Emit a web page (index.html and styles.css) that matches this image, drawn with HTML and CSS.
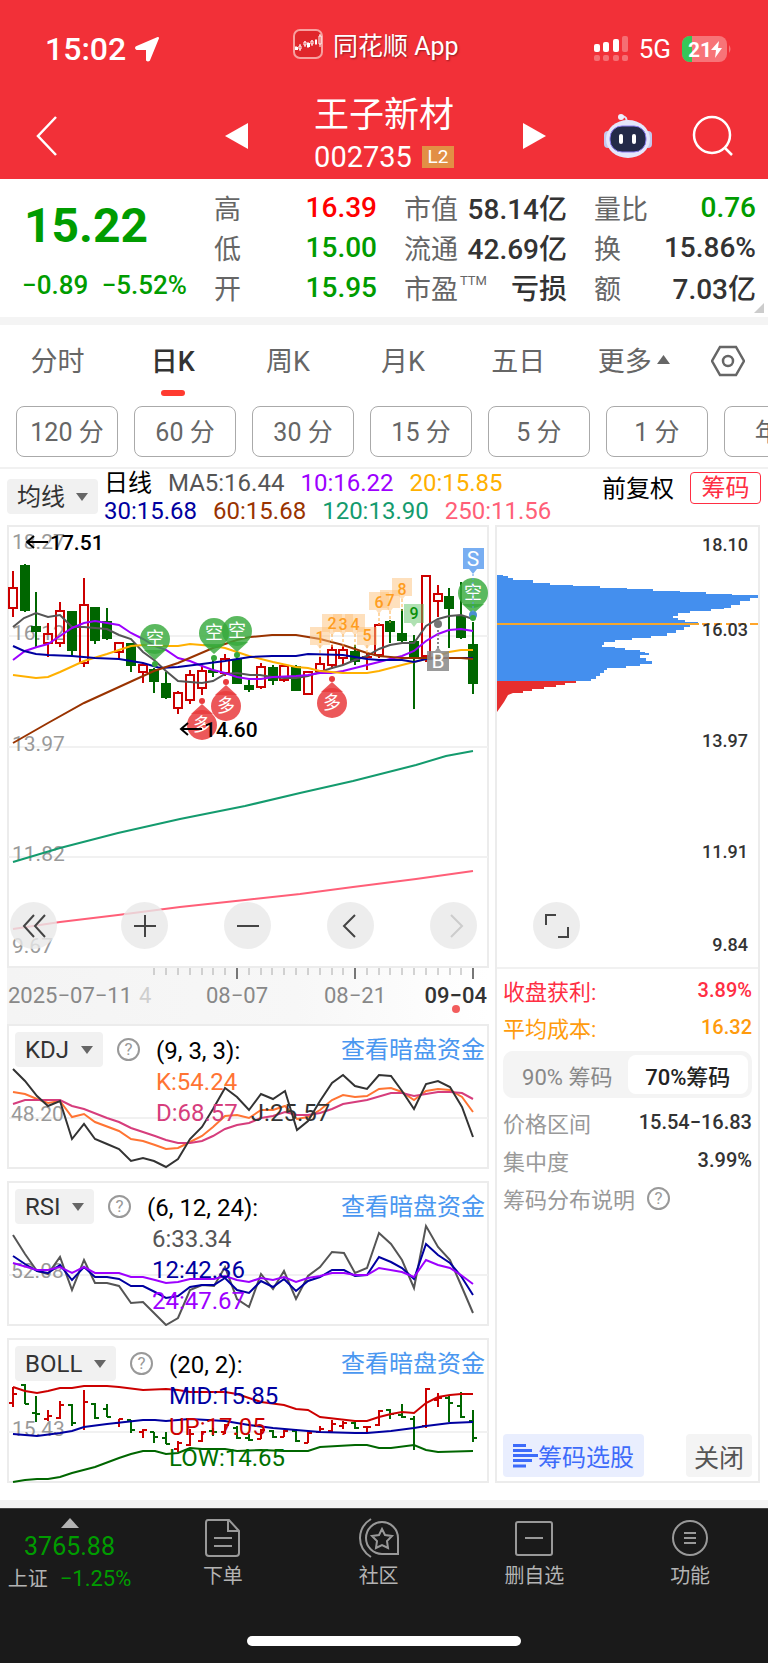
FILE: index.html
```html
<!DOCTYPE html>
<html lang="zh-CN">
<head>
    <meta charset="UTF-8">
    <meta name="viewport" content="width=device-width, initial-scale=1.0">
    <title>王子新材 002735</title>
    <link rel="stylesheet" href="styles.css">
</head>
<body>
    <header class="top">
        <div class="status">
            <div class="status-side">
                <span class="clock">15:02</span>
                <svg width="26" height="26" viewBox="0 0 26 26"><path d="M24 2 15 24q-1 1-2 0V13H3q-2-1 0-2z" fill="#fff" stroke="#fff" stroke-width="2" stroke-linejoin="round"/></svg>
            </div>
            <div class="status-app">
                <svg width="30" height="30" viewBox="0 0 30 30">
                    <rect x="1" y="1" width="28" height="28" rx="6" fill="#e0262b" stroke="#f7a09f" stroke-width="2"/>
                    <path d="M3 17v4M7 15v7M12 12v6M15 13v6M19 11v6M23 10v6M27 5v13" stroke="#fff"/>
                    <path d="M2 18h3v3H2zM14 14h3v4h-3zM22 11h2v4h-2z" fill="#fff"/>
                    <path d="M6 17h2v3H6zM11 13h2v3h-2zM18 12h2v3h-2zM26 7h2v8h-2z" fill="#e0262b" stroke="#fff"/>
                </svg>
                <span>同花顺 App</span>
            </div>
            <div class="status-side right">
                <svg width="34" height="26" viewBox="0 0 34 26">
                    <g fill="#fff"><rect y="8" width="6" height="8" rx="2"/><rect x="9" y="6" width="6" height="10" rx="2"/><rect x="19" y="3" width="6" height="13" rx="2"/></g>
                    <g fill="#fff" opacity=".3"><rect x="28" y="0" width="6" height="16" rx="2"/><rect y="19" width="6" height="6" rx="2"/><rect x="9" y="19" width="6" height="6" rx="2"/><rect x="19" y="19" width="6" height="6" rx="2"/><rect x="28" y="19" width="6" height="6" rx="2"/></g>
                </svg>
                <span class="net">5G</span>
                <svg width="50" height="26" viewBox="0 0 50 26">
                    <rect width="45" height="26" rx="8" fill="#f77478"/>
                    <path d="M10 0H8a8 8 0 0 0-8 8v10a8 8 0 0 0 8 8h2z" fill="#34c759"/>
                    <path d="M47 9q3 4 0 8z" fill="#f77478"/>
                    <text x="6" y="21" class="battery-num">21</text>
                    <path d="M37 5 29 14h5l-1 8 7-10h-4z" fill="#fff"/>
                </svg>
            </div>
        </div>
        <nav class="titlebar">
            <button class="icon-btn back" aria-label="返回"><svg width="22" height="40" viewBox="0 0 22 40"><path d="M20 1 2 20l18 19" fill="none" stroke="#fff" stroke-width="2.500"/></svg></button>
            <button class="icon-btn prev" aria-label="上一只"><svg width="24" height="26" viewBox="0 0 24 26"><path d="M23 0v26L0 13z" fill="#fff"/></svg></button>
            <div class="stock">
                <h1>王子新材</h1>
                <div class="code">002735 <span>L2</span></div>
            </div>
            <button class="icon-btn next" aria-label="下一只"><svg width="24" height="26" viewBox="0 0 24 26"><path d="M1 0v26l23-13z" fill="#fff"/></svg></button>
            <button class="icon-btn robot" aria-label="助手">
                <svg width="48" height="46" viewBox="0 0 48 46">
                    <path d="M22 9q2-5-4-6" fill="none" stroke="#dfe4fa" stroke-width="2"/><circle cx="17" cy="4" r="3" fill="#eef0ff"/>
                    <rect x="0" y="18" width="8" height="17" rx="4" fill="#c3c8ee"/><rect x="40" y="18" width="8" height="17" rx="4" fill="#c3c8ee"/>
                    <ellipse cx="24" cy="26" rx="22" ry="19" fill="#e4e7fb"/>
                    <rect x="6" y="13" width="36" height="26" rx="12" fill="#232a48" stroke="#8b7df0"/>
                    <rect x="15" y="21" width="4" height="10" rx="2" fill="#fff"/><rect x="28" y="21" width="4" height="10" rx="2" fill="#fff"/>
                </svg>
            </button>
            <button class="icon-btn search" aria-label="搜索"><svg width="42" height="42" viewBox="0 0 42 42"><g fill="none" stroke="#fff" stroke-width="2.500"><circle cx="20" cy="20" r="18"/><path d="m33 33 7 7"/></g></svg></button>
        </nav>
    </header>

    <section class="quote">
        <div class="price">
            <div class="last">15.22</div>
            <div class="change"><span>−0.89</span><span>−5.52%</span></div>
        </div>
        <dl>
            <div><dt>高</dt><dd class="up">16.39</dd></div>
            <div><dt>低</dt><dd class="down">15.00</dd></div>
            <div><dt>开</dt><dd class="down">15.95</dd></div>
        </dl>
        <dl>
            <div><dt>市值</dt><dd>58.14亿</dd></div>
            <div><dt>流通</dt><dd>42.69亿</dd></div>
            <div><dt>市盈<sup>TTM</sup></dt><dd>亏损</dd></div>
        </dl>
        <dl>
            <div><dt>量比</dt><dd class="down">0.76</dd></div>
            <div><dt>换</dt><dd>15.86%</dd></div>
            <div><dt>额</dt><dd>7.03亿</dd></div>
        </dl>
        <span class="corner"></span>
    </section>

    <nav class="tabs">
        <button>分时</button>
        <button class="active">日K</button>
        <button>周K</button>
        <button>月K</button>
        <button>五日</button>
        <button>更多<svg width="13" height="9" viewBox="0 0 13 9"><path d="M0 9h13L6.500 0z" fill="#666"/></svg></button>
        <button class="gear" aria-label="设置"><svg width="34" height="32" viewBox="0 0 34 32"><g fill="none" stroke="#666" stroke-width="2.500"><path d="M9 2h16l8 14-8 14H9L1 16z"/><circle cx="17" cy="16" r="5"/></g></svg></button>
    </nav>
    <div class="minutes">
        <button>120 分</button><button>60 分</button><button>30 分</button><button>15 分</button><button>5 分</button><button>1 分</button><button>年K</button>
    </div>

    <div class="ma-bar">
        <label class="drop"><select aria-label="主图指标"><option>均线</option></select></label>
        <div class="ma-list">
            <div><span class="black">日线</span><span class="c5">MA5:16.44</span><span class="c10">10:16.22</span><span class="c20">20:15.85</span></div>
            <div><span class="c30">30:15.68</span><span class="c60">60:15.68</span><span class="c120">120:13.90</span><span class="c250">250:11.56</span></div>
        </div>
        <button class="fq">前复权</button>
        <button class="chip-btn">筹码</button>
    </div>

    <main class="board">
        <div class="left">
            <svg class="kline" viewBox="7 525 482 443">
                <rect x="8" y="526" width="480" height="441" fill="none" stroke="#ececec" stroke-width="2"/>
                <path d="M8 636h480M8 747h480M8 857h480" stroke="#f1f1f1" stroke-width="2"/>
                <g class="scale"><text x="12" y="549">18.27</text><text x="12" y="640">16.12</text><text x="12" y="751">13.97</text><text x="12" y="861">11.82</text><text x="12" y="953">9.67</text></g>

                <!-- candles -->
                <g fill="none" stroke="#c00" stroke-width="2">
                    <path d="M13 571v17M13 608v9M48 623v11M48 643v14M60 602v9M60 643v4M84 578v27M84 663v4M119 652v7M143 663v2M143 672v11M178 691v2M178 708v6M190 670v5M190 700v4M202 665v6M202 688v7M225 654v5M225 673v3M261 663v4M261 687v2M284 664v2M284 680v2M308 671v1M320 657v7M332 645v5M332 665v4M343 645v5M343 658v7M367 653v17M362 657h10M379 623v2M379 655v3M426 656v6M438 585v9M438 601v16"/>
                    <path d="M9 588h8v20H9zM44 634h8v9h-8zM56 611h8v32h-8zM80 605h8v58h-8zM115 643h8v9h-8zM139 665h8v7h-8zM174 693h8v15h-8zM186 675h8v25h-8zM198 671h8v17h-8zM221 659h8v14h-8zM257 667h8v20h-8zM280 666h8v14h-8zM304 672h8v22h-8zM316 664h8v7h-8zM328 650h8v15h-8zM339 650h8v8h-8zM375 625h8v30h-8zM422 576h8v80h-8zM434 594h8v7h-8z"/>
                </g>
                <path d="M25 564v48M36 592v55M72 611v46M95 607v37M107 608v32M131 643v29M154 668v25M166 672v27M213 660v17M237 655v29M249 680v12M273 665v20M296 665v26M355 645v20M390 620v23M402 609v33M414 635v74M449 588v60M461 582v57M473 622v72" stroke="#060" stroke-width="2"/>
                <path d="M20 565h10v46H20zM31 626h10v6H31zM67 611h10v40H67zM90 607h10v34H90zM102 621h10v18h-10zM126 643h10v23h-10zM149 669h10v13h-10zM161 683h10v15h-10zM208 670h10v3h-10zM232 659h10v25h-10zM244 685h10v5h-10zM268 667h10v14h-10zM291 666h10v25h-10zM350 651h10v11h-10zM385 621h10v11h-10zM397 633h10v8h-10zM409 641h10v17h-10zM444 596h10v13h-10zM456 616h10v22h-10zM468 644h10v40h-10z" fill="#060"/>

                <!-- moving averages -->
                <g fill="none" stroke-width="2">
                    <polyline stroke="#555" points="13,627 24,618 36,613 48,617 60,615 72,627 84,627 95,628 107,629 119,635 131,639 143,652 154,660 166,671 178,681 190,682 202,683 213,681 225,674 237,673 250,675 260,675 272,677 284,678 296,678 308,676 320,672 332,668 343,665 355,660 367,656 379,649 390,645 402,643 414,643 426,626 438,619 449,616 461,615 473,619"/>
                    <polyline stroke="#9d00ff" points="13,660 25,651 37,647 48,644 60,636 72,628 84,623 95,621 107,623 119,625 131,633 143,639 155,646 166,650 178,658 190,661 202,666 213,670 225,673 237,677 249,679 261,679 273,677 296,676 308,675 320,673 331,673 343,671 355,668 367,665 379,662 390,659 402,656 414,651 426,641 438,634 449,630 461,629 473,631"/>
                    <polyline stroke="#ffb000" points="13,675 36,678 48,677 60,672 84,661 107,654 119,650 131,646 143,645 155,646 178,646 190,644 213,646 225,648 237,652 249,656 273,662 296,667 308,668 320,671 343,673 367,673 379,671 402,665 414,662 426,659 438,656 449,652 461,650 473,650"/>
                    <polyline stroke="#0000a0" points="13,646 24,651 36,654 48,655 72,656 95,658 119,659 143,663 160,668 178,667 202,664 225,661 250,657 272,656 296,656 308,654 343,655 355,657 367,659 379,660 402,660 414,662 426,659 438,658 473,658"/>
                    <polyline stroke="#930" points="13,743 48,723 84,703 119,687 154,671 178,663 213,648 237,640 250,637 272,635 296,635 320,639 343,645 355,649 367,653 379,656 402,658 461,658 473,659"/>
                    <polyline stroke="#149b6e" points="13,862 60,848 118,833 180,819 245,806 300,793 353,781 416,765 446,756 473,751"/>
                    <polyline stroke="#ff5f78" points="13,929 60,922 118,915 180,907 245,900 300,894 353,887 416,879 473,871"/>
                </g>

                <!-- buy and sell marks -->
                <g class="mark" fill="#37a93c">
                    <path d="M144 650l11 10 11-10zM203 644l11 10 11-10zM226 642l11 10 11-10zM462 604l11 10 11-10z" opacity=".82"/>
                    <circle cx="155" cy="639" r="15" opacity=".82"/><circle cx="214" cy="633" r="15" opacity=".82"/><circle cx="237" cy="631" r="15" opacity=".82"/><circle cx="473" cy="593" r="15" opacity=".82"/>
                    <circle cx="155" cy="664" r="3"/><circle cx="214" cy="658" r="3"/><circle cx="237" cy="655" r="3"/><circle cx="473" cy="615" r="4" fill="#4a8fd0"/><circle cx="473" cy="618" r="3"/>
                    <text x="155" y="645">空</text><text x="214" y="639">空</text><text x="237" y="637">空</text><text x="473" y="599">空</text>
                </g>
                <g class="mark" fill="#e93b3d">
                    <path d="M191 714l11-10 11 10zM215 695l11-10 11 10zM321 692l11-10 11 10z" opacity=".85"/>
                    <circle cx="202" cy="725" r="15" opacity=".85"/><circle cx="226" cy="706" r="15" opacity=".85"/><circle cx="332" cy="703" r="15" opacity=".85"/>
                    <circle cx="202" cy="701" r="3"/><circle cx="226" cy="682" r="3"/><circle cx="332" cy="679" r="3"/>
                    <text x="202" y="731">多</text><text x="226" y="712">多</text><text x="332" y="709">多</text>
                </g>
                <path d="M320 645v12M332 634v14M343 634v14M355 634v14M367 645v10M379 613v12M390 611v12M402 599v12" stroke="#ffb14d" stroke-width="1" stroke-dasharray="3 2"/>
                <g fill="#fdc27c" fill-opacity=".5">
                    <path d="M310 627h20v18h-7l-3 4-3-4h-7z"/><path d="M322 614h20v18h-7l-3 4-3-4h-7z"/><path d="M333 614h20v18h-7l-3 4-3-4h-7z"/><path d="M345 614h20v18h-7l-3 4-3-4h-7z"/><path d="M357 627h20v18h-7l-3 4-3-4h-7z"/><path d="M369 592h20v18h-7l-3 4-3-4h-7z"/><path d="M380 590h20v18h-7l-3 4-3-4h-7z"/><path d="M392 578h20v18h-7l-3 4-3-4h-7z"/>
                </g>
                <path d="M404 604h20v19h-7l-3 4-3-4h-7z" fill="#5fc465" fill-opacity=".5"/>
                <g class="count"><text x="320" y="643">1</text><text x="332" y="629">2</text><text x="343" y="630">3</text><text x="355" y="630">4</text><text x="367" y="641">5</text><text x="379" y="608">6</text><text x="390" y="606">7</text><text x="402" y="595">8</text><text x="414" y="619" class="nine">9</text></g>
                <path d="M473 574v40" stroke="#5c9cec" stroke-dasharray="2 2"/>
                <path d="M463 548h21v21h-7l-4 5-4-5h-6z" fill="#78aef2"/>
                <path d="M438 630v20" stroke="#888" stroke-width="2" stroke-dasharray="2 2"/><circle cx="438" cy="624" r="4" fill="#777"/>
                <path d="M427 651h8l3-4 3 4h8v20h-22z" fill="#888" fill-opacity=".85"/>
                <g class="bs"><text x="473" y="566">S</text><text x="438" y="668">B</text></g>

                <!-- high and low -->
                <path d="M48 542H27m7-6-7 6 7 6M202 729h-21m7-6-7 6 7 6" fill="none" stroke="#000" stroke-width="2"/>
                <g class="extreme"><text x="50" y="550">17.51</text><text x="204" y="737">14.60</text></g>
            </svg>

            <svg class="axis" viewBox="7 968 482 56">
                <defs><linearGradient id="fade"><stop offset="0" stop-color="#f4f4f4"/><stop offset=".6" stop-color="#f7f7f7"/><stop offset="1" stop-color="#fff"/></linearGradient></defs>
                <rect x="7" y="968" width="482" height="56" fill="url(#fade)"/>
                <path d="M154 968v7M166 968v7M178 968v7M190 968v7M202 968v7M213 968v7M225 968v7M249 968v7M261 968v7M272 968v7M284 968v7M296 968v7M308 968v7M320 968v7M332 968v7M343 968v7M367 968v7M379 968v7M390 968v7M402 968v7M414 968v7M426 968v7M438 968v7M450 968v7M461 968v7" stroke="#aaa"/>
                <path d="M237 968v11M355 968v11M473 968v11" stroke="#777" stroke-width="2"/>
                <text x="8" y="1003">2025−07−11</text><text x="139" y="1003" opacity=".35">4</text>
                <text x="237" y="1003" text-anchor="middle">08−07</text><text x="355" y="1003" text-anchor="middle">08−21</text><text x="487" y="1003" text-anchor="end" class="today">09−04</text>
                <circle cx="456" cy="1009" r="4" fill="#f25d5d"/>
            </svg>

            <section class="panel">
                <svg viewBox="7 1024 482 145">
                    <rect x="8" y="1025" width="480" height="143" fill="none" stroke="#ececec" stroke-width="2"/><path d="M8 1118h480" stroke="#f1f1f1" stroke-width="2"/>
                    <text x="11" y="1121">48.20</text>
                    <g fill="none" stroke-width="2">
                        <polyline stroke="#ff7433" points="13,1092 25,1094 37,1099 48,1103 60,1101 72,1117 84,1114 95,1122 119,1131 131,1139 143,1141 155,1145 166,1149 178,1148 190,1142 202,1136 213,1127 225,1116 237,1115 249,1118 261,1110 273,1110 285,1106 297,1119 308,1117 320,1110 332,1100 343,1095 355,1097 367,1096 379,1089 391,1088 402,1092 414,1100 426,1091 438,1089 450,1090 462,1097 473,1112"/>
                        <polyline stroke="#d63d7c" points="13,1104 25,1100 37,1100 60,1100 72,1106 84,1109 107,1118 119,1122 131,1128 155,1136 166,1140 178,1143 190,1143 202,1141 213,1136 225,1129 237,1125 249,1123 261,1118 273,1116 285,1112 297,1115 308,1115 320,1113 332,1109 343,1104 367,1100 391,1093 402,1093 414,1096 438,1092 450,1092 462,1093 473,1099"/>
                        <polyline stroke="#333" points="13,1069 25,1081 37,1096 48,1106 60,1101 72,1139 84,1124 95,1139 107,1144 119,1149 131,1161 143,1158 154,1161 166,1167 178,1159 190,1139 202,1127 213,1109 225,1088 237,1097 249,1110 261,1094 273,1099 285,1091 297,1130 308,1121 320,1101 332,1083 343,1075 355,1086 367,1089 379,1075 391,1076 402,1091 414,1109 426,1084 438,1081 450,1087 462,1107 473,1137"/>
                    </g>
                </svg>
                <div class="panel-head">
                    <label class="drop"><select aria-label="副图一"><option>KDJ</option></select></label>
                    <button class="help" aria-label="说明">?</button>
                    <div class="params"><div>(9, 3, 3):</div><div class="ck">K:54.24</div><div><span class="cd">D:68.57</span><span class="cj">J:25.57</span></div></div>
                    <a href="#">查看暗盘资金</a>
                </div>
            </section>

            <section class="panel">
                <svg viewBox="7 1181 482 145">
                    <rect x="8" y="1182" width="480" height="143" fill="none" stroke="#ececec" stroke-width="2"/><path d="M8 1275h480" stroke="#f1f1f1" stroke-width="2"/>
                    <text x="11" y="1278">52.08</text>
                    <g fill="none" stroke-width="2">
                        <polyline stroke="#555" points="13,1235 25,1254 37,1271 48,1274 60,1257 72,1290 84,1260 95,1283 107,1283 119,1286 131,1303 143,1302 155,1314 166,1325 178,1318 190,1290 202,1285 214,1286 225,1267 237,1299 249,1307 261,1274 273,1289 284,1271 296,1299 308,1276 320,1267 332,1252 344,1253 355,1273 367,1268 379,1233 391,1244 402,1260 414,1288 426,1226 438,1247 450,1260 461,1285 473,1313"/>
                        <polyline stroke="#0000a0" points="13,1256 25,1264 37,1271 48,1273 60,1265 72,1280 84,1267 95,1277 107,1277 119,1279 131,1286 143,1286 155,1292 166,1298 178,1296 190,1287 202,1285 214,1285 225,1278 237,1290 249,1293 261,1281 273,1287 284,1279 296,1291 308,1281 320,1277 332,1270 344,1270 355,1276 367,1275 379,1257 391,1262 402,1268 414,1279 426,1244 438,1255 450,1263 461,1276 473,1295"/>
                        <polyline stroke="#9d00ff" points="13,1263 37,1270 48,1270 60,1267 72,1273 84,1267 95,1273 119,1273 131,1277 143,1277 155,1280 166,1283 178,1282 190,1279 214,1279 225,1276 237,1280 249,1282 261,1278 273,1280 284,1277 296,1282 308,1278 320,1276 332,1273 344,1273 355,1275 367,1275 379,1268 402,1272 414,1277 426,1260 438,1265 450,1268 461,1275 473,1284"/>
                    </g>
                </svg>
                <div class="panel-head">
                    <label class="drop"><select aria-label="副图二"><option>RSI</option></select></label>
                    <button class="help" aria-label="说明">?</button>
                    <div class="params rsi"><div>(6, 12, 24):</div><div class="c5">6:33.34</div><div class="c30">12:42.36</div><div class="c10">24:47.67</div></div>
                    <a href="#">查看暗盘资金</a>
                </div>
            </section>

            <section class="panel">
                <svg viewBox="7 1338 482 145">
                    <rect x="8" y="1339" width="480" height="143" fill="none" stroke="#ececec" stroke-width="2"/><path d="M8 1432h480" stroke="#f1f1f1" stroke-width="2"/>
                    <text x="12" y="1436">15.43</text>
                    <g fill="none" stroke-width="2">
                        <path stroke="#c00" d="M13 1387v20M9 1403h4M13 1394h4M48 1410v11M44 1419h4M48 1416h4M60 1401v18M56 1418h4M60 1405h4M84 1390v40M84 1402h4M119 1419v8M115 1423h4M119 1419h4M143 1429v9M139 1432h4M143 1430h4M178 1441v11M174 1449h4M178 1443h4M190 1429v17M186 1445h4M190 1434h4M202 1431v11M198 1441h4M202 1432h4M225 1424v10M221 1432h4M225 1425h4M261 1429v10M257 1439h4M261 1430h4M284 1430v7M280 1437h4M284 1431h4M308 1432v11M304 1443h4M308 1433h4M320 1426v6M316 1432h4M320 1429h4M332 1420v13M328 1431h4M332 1424h4M343 1421v8M339 1426h4M343 1423h4M367 1426v6M363 1427h8M379 1410v16M375 1425h4M379 1411h4M426 1388v40M422 1426h4M426 1389h4M438 1393v14M434 1400h4M438 1398h4"/>
                        <path stroke="#060" d="M25 1384v20M21 1385h4M25 1404h4M36 1396v26M32 1413h4M36 1414h4M72 1404v22M68 1405h4M72 1423h4M95 1403v16M91 1404h4M95 1418h4M107 1404v13M103 1409h4M107 1417h4M131 1420v13M127 1420h4M131 1430h4M154 1432v11M150 1432h4M154 1437h4M166 1432v12M162 1438h4M166 1444h4M213 1428v8M209 1431h4M213 1432h4M237 1426v13M233 1428h4M237 1438h4M249 1434v7M245 1438h4M249 1440h4M273 1430v8M269 1431h4M273 1437h4M296 1430v12M292 1431h4M296 1441h4M355 1421v8M351 1423h4M355 1428h4M390 1409v10M386 1410h4M390 1414h4M402 1404v14M398 1415h4M402 1417h4M414 1416v34M410 1419h4M449 1395v27M445 1398h4M449 1403h4M461 1392v26M457 1406h4M461 1417h4M473 1410v32M469 1421h4M473 1438h4"/>
                        <polyline stroke="#c00" points="13,1387 25,1391 37,1393 48,1391 60,1388 72,1388 84,1386 107,1386 119,1387 143,1390 166,1389 178,1390 190,1392 225,1392 237,1394 249,1398 261,1402 284,1405 296,1409 308,1410 320,1417 355,1421 367,1421 379,1417 391,1414 402,1412 414,1413 426,1403 438,1397 450,1395 461,1394 473,1394"/>
                        <polyline stroke="#0000a0" points="13,1434 37,1436 60,1433 72,1431 84,1427 107,1424 143,1420 155,1420 166,1421 190,1419 225,1421 249,1425 273,1428 296,1430 320,1432 355,1433 367,1433 391,1431 414,1428 426,1426 450,1423 473,1422"/>
                        <polyline stroke="#060" points="13,1482 25,1480 37,1479 48,1479 60,1477 72,1473 95,1467 119,1458 131,1454 143,1451 155,1451 166,1454 178,1453 190,1448 202,1449 225,1449 237,1451 261,1450 284,1451 308,1451 320,1447 355,1445 367,1445 379,1448 391,1448 414,1445 426,1450 438,1452 473,1451"/>
                    </g>
                </svg>
                <div class="panel-head">
                    <label class="drop"><select aria-label="副图三"><option>BOLL</option></select></label>
                    <button class="help" aria-label="说明">?</button>
                    <div class="params"><div>(20, 2):</div><div class="c30">MID:15.85</div><div class="cup">UP:17.05</div><div class="clow">LOW:14.65</div></div>
                    <a href="#">查看暗盘资金</a>
                </div>
            </section>
        </div>

        <aside class="chips">
            <svg class="chip-chart" viewBox="497 527 261 440">
                <path fill="#448fee" d="M497 575H503V576H508V578H513V580H533V583H550V585H573V586H600V588H627V589H653V591H680V592H706V594H732V595H759V598H750V601H740V605H731V608H724V609H711V611H690V613H678V616H673V618H678V620H685V622H698V624H690V627H684V630H676V633H667V636H651V638H632V640H615V642H604V645H602V647H615V648H625V650H640V652H645V653H649V655H640V658H646V661H652V664H640V666H626V668H607V670H604V673H600V676H596V679H591V681H497z"/>
                <path fill="#e62e2e" d="M497 681H576V683H565V685H556V687H544V689H532V691H523V693H513L508 695 504 702 497 712z"/>
                <path d="M497 624h202" stroke="#f5a62b" stroke-width="2"/><path d="M702 624h57" stroke="#ffa52b" stroke-width="2" stroke-dasharray="8 4"/>
                <g><text x="748" y="551">18.10</text><text x="748" y="636">16.03</text><text x="748" y="747">13.97</text><text x="748" y="858">11.91</text><text x="748" y="951">9.84</text></g>
            </svg>
            <div class="chip-info">
                <div class="row red"><span>收盘获利:</span><b>3.89%</b></div>
                <div class="row orange"><span>平均成本:</span><b>16.32</b></div>
                <div class="segment"><button>90% 筹码</button><button class="on">70%筹码</button></div>
                <div class="row"><span>价格区间</span><b>15.54−16.83</b></div>
                <div class="row"><span>集中度</span><b>3.99%</b></div>
                <div class="row note"><span>筹码分布说明</span><button class="help" aria-label="说明">?</button></div>
            </div>
            <div class="chip-actions">
                <button class="pick"><svg width="25" height="24" viewBox="0 0 25 24"><path d="M0 1.500h13M0 6.500h19M0 11.500h25M0 16.500h19M0 22h13" stroke="#3d6bfa" stroke-width="3"/></svg>筹码选股</button>
                <button class="close">关闭</button>
            </div>
        </aside>

        <div class="tools">
            <button aria-label="收起"><svg viewBox="0 0 24 24"><path d="M12 1 2 12l10 11M23 1 13 12l10 11"/></svg></button>
            <button aria-label="放大"><svg viewBox="0 0 24 24"><path d="M1 12h22M12 1v22"/></svg></button>
            <button aria-label="缩小"><svg viewBox="0 0 24 24"><path d="M1 12h22"/></svg></button>
            <button aria-label="左移"><svg viewBox="0 0 24 24"><path d="M16 1 5 12l11 11"/></svg></button>
            <button aria-label="右移" disabled><svg viewBox="0 0 24 24"><path d="m9 1 11 11L9 23"/></svg></button>
            <button aria-label="全屏"><svg viewBox="0 0 24 24"><path d="M1 11V1h10M13 23h10V13"/></svg></button>
        </div>
    </main>

    <footer class="bottom">
        <div class="bottom-bar">
            <button class="index">
                <svg width="18" height="10" viewBox="0 0 18 10"><path d="M0 10h18L9 0z" fill="#b3b3b3"/></svg>
                <span class="point">3765.88</span>
                <span class="pct"><i>上证</i>−1.25%</span>
            </button>
            <button><svg width="40" height="40" viewBox="0 0 40 40"><path d="M5 2h21l10 11v22q0 3-3 3H6q-3 0-3-3V5q0-3 2-3zM25 2v11h10M11 20h18M11 28h18"/></svg>下单</button>
            <button><svg width="40" height="40" viewBox="0 0 40 40"><path d="M23 4a16 16 0 1 0 0 32h16V20A16 16 0 0 0 23 4zM12 1Q1 8 1 20t11 19M23 11l3 6 7 1-5 5 1 7-6-3-6 3 1-7-5-5 7-1z"/></svg>社区</button>
            <button><svg width="40" height="40" viewBox="0 0 40 40"><rect x="2" y="4" width="36" height="33" rx="2"/><path d="M11 20h18"/></svg>删自选</button>
            <button><svg width="40" height="40" viewBox="0 0 40 40"><circle cx="20" cy="20" r="17"/><path d="M14 15h12M14 20h12M14 25h12"/></svg>功能</button>
        </div>
        <div class="home"></div>
    </footer>
</body>
</html>
```

FILE: styles.css
```css
* {
    box-sizing: border-box;
}
body {
    margin: 0;
    font-family: Roboto, "Noto Sans CJK SC", sans-serif;
    font-size: 24px;
    color: #333;
    background: #fff;
}
button, select {
    font: inherit;
    color: inherit;
    border: none;
    background: none;
    padding: 0;
    margin: 0;
}
svg {
    display: block;
}
h1, dl, dd {
    margin: 0;
}

/* header */
.top {
    background: #f23038;
    color: #fff;
    height: 179px;
}
.status {
    display: grid;
    grid-template-columns: 248px auto 1fr;
    align-items: center;
    padding: 28px 36px 0 45px;
}
.status-side {
    display: flex;
    align-items: center;
    gap: 8px;
    height: 42px;
}
.status-side.right {
    justify-content: flex-end;
    gap: 11px;
}
.clock {
    font-size: 32px;
    font-weight: 500;
}
.net {
    font-size: 26px;
}
.battery-num {
    font-size: 21px;
    font-weight: bold;
    fill: #fff;
}
.status-app {
    display: flex;
    align-items: center;
    gap: 10px;
    height: 32px;
    align-self: start;
    font-size: 25px;
    text-shadow: 1px 1px 2px rgba(0, 0, 0, .4);
}
.titlebar {
    display: flex;
    align-items: center;
    padding: 22px 34px 0 36px;
    height: 109px;
}
.prev {
    margin-left: auto;
    margin-right: 65px;
}
.stock {
    text-align: center;
}
.stock h1 {
    margin-bottom: 4px;
    font-size: 35px;
    line-height: 38px;
    font-weight: 400;
}
.code {
    display: flex;
    align-items: center;
    justify-content: center;
    gap: 10px;
    font-size: 29px;
    line-height: 36px;
}
.code span {
    width: 32px;
    background: #e28f45;
    font-size: 19px;
    line-height: 22px;
}
.next {
    margin-left: 68px;
}
.robot {
    margin-left: 58px;
    margin-right: 40px;
}

/* quote */
.quote {
    position: relative;
    display: grid;
    grid-template-columns: 165px 163px 163px 162px;
    justify-content: space-between;
    padding: 8px 12px 10px 22px;
    border-bottom: 8px solid #f4f4f4;
    height: 146px;
}
.price {
    color: #009c00;
    font-weight: 500;
}
.last {
    padding-left: 2px;
    font-size: 48px;
    font-weight: bold;
    line-height: 78px;
}
.change {
    display: flex;
    justify-content: space-between;
    font-size: 26px;
    line-height: 40px;
}
dl div {
    display: flex;
    justify-content: space-between;
    align-items: center;
    height: 40px;
}
dt {
    font-size: 27px;
    color: #666;
}
dt sup {
    font-size: 13px;
    margin-left: 2px;
    vertical-align: 14px;
    line-height: 0;
}
dd {
    font-size: 28px;
    font-weight: 500;
}
.up {
    color: #f00;
}
.down {
    color: #009c00;
}
.corner {
    position: absolute;
    right: 4px;
    bottom: 4px;
    border: 5px solid #ccc;
    border-left-color: transparent;
    border-top-color: transparent;
}

/* period tabs */
.tabs {
    display: grid;
    grid-template-columns: repeat(5, 115fr) 116fr 73fr;
    height: 81px;
    padding-right: 3px;
    color: #666;
    font-size: 27px;
}
.tabs button {
    position: relative;
    display: flex;
    align-items: center;
    justify-content: center;
    gap: 5px;
    padding-bottom: 13px;
}
.tabs .gear {
    padding-bottom: 9px;
}
.tabs .active {
    color: #333;
    font-weight: 500;
}
.tabs .active::after {
    content: "";
    position: absolute;
    bottom: 10px;
    width: 24px;
    height: 6px;
    border-radius: 3px;
    background: #ff3b30;
}
.minutes {
    display: flex;
    gap: 16px;
    padding: 0 0 10px 16px;
    overflow: hidden;
    border-bottom: 2px solid #f1f1f1;
}
.minutes button {
    flex: 0 0 102px;
    height: 51px;
    padding-bottom: 3px;
    border: 1px solid #aaa;
    border-radius: 8px;
    color: #666;
    font-size: 25px;
}

/* moving average bar */
.ma-bar {
    display: flex;
    align-items: flex-start;
    height: 56px;
    padding: 0 7px;
}
.drop {
    position: relative;
    display: block;
}
.drop select {
    appearance: none;
    display: block;
    height: 35px;
    padding: 0 33px 0 10px;
    border-radius: 4px;
    background: #f1f1f1;
    font-size: 24px;
}
.drop::after {
    content: "";
    position: absolute;
    right: 10px;
    top: 14px;
    border: 6px solid transparent;
    border-top: 8px solid #666;
    border-bottom: none;
}
.ma-bar .drop {
    margin-top: 10px;
}
.ma-list {
    margin: 0 auto 0 6px;
    line-height: 28px;
    white-space: nowrap;
}
.ma-list div {
    display: flex;
    gap: 16px;
}
.fq {
    color: #000;
    margin: 0 16px 0 0;
}
.chip-btn {
    width: 71px;
    height: 32px;
    margin-top: 3px;
    border: 1px solid #ff2e43;
    border-radius: 4px;
    color: #ff2e43;
    line-height: 28px;
}
.black { color: #000; }
.c5 { color: #555; }
.c10 { color: #9d00ff; }
.c20 { color: #ffb000; }
.c30 { color: #0000a0; }
.c60 { color: #930; }
.c120 { color: #149b6e; }
.c250 { color: #ff5f78; }
.ck { color: #ff7433; }
.cd { color: #d63d7c; }
.cj { color: #333; margin-left: 13px; }
.cup { color: #c00; }
.clow { color: #007000; }

/* charts */
.board {
    position: relative;
    display: grid;
    grid-template-columns: 482fr 265fr;
    gap: 6px;
    padding: 0 8px 17px 7px;
}
.left > svg, .panel > svg {
    width: 100%;
}
.scale, .panel svg {
    font-size: 21px;
    fill: #999;
}
.extreme {
    font-size: 21px;
    font-weight: 500;
    fill: #000;
}
.mark text {
    fill: #fff;
    font-size: 18px;
    text-anchor: middle;
}
.count {
    fill: #ff9d20;
    font-size: 16px;
    font-weight: 500;
    text-anchor: middle;
}
.count .nine {
    fill: #0a8f0a;
}
.bs {
    fill: #fff;
    font-size: 21px;
    text-anchor: middle;
}
.axis {
    font-size: 22px;
    fill: #888;
}
.axis .today {
    fill: #333;
    font-weight: 500;
}
.panel {
    position: relative;
}
.panel + .panel {
    margin-top: 12px;
}
.panel-head {
    position: absolute;
    inset: 8px 4px auto 8px;
    display: flex;
    align-items: flex-start;
}
.help {
    width: 23px;
    height: 23px;
    border: 2px solid #999;
    border-radius: 50%;
    color: #999;
    font-size: 17px;
    line-height: 19px;
}
.panel-head .help {
    margin: 6px 16px 0 14px;
}
.params {
    line-height: 31px;
    margin-top: 4px;
}
.params div:first-child {
    color: #000;
}
.params.rsi div:not(:first-child) {
    padding-left: 5px;
}
.panel-head a {
    margin-left: auto;
    line-height: 36px;
    color: #4a97f0;
    text-decoration: none;
}
.tools {
    position: absolute;
    top: 377px;
    left: 10px;
    display: flex;
    gap: 56px;
}
.tools button {
    display: grid;
    place-items: center;
    width: 47px;
    height: 47px;
    border-radius: 50%;
    background: rgba(232, 232, 232, .8);
}
.tools button:first-child {
    margin-right: 8px;
}
.tools svg {
    width: 24px;
    height: 24px;
    fill: none;
    stroke: #444;
    stroke-width: 2;
}
.tools button:disabled svg {
    stroke: #ccc;
}

/* chip distribution */
.chips {
    display: flex;
    flex-direction: column;
    border: 2px solid #ececec;
}
.chip-chart {
    width: 100%;
    border-bottom: 2px solid #f1f1f1;
    font-size: 18px;
    font-weight: 500;
    fill: #333;
    text-anchor: end;
}
.chip-info {
    padding: 2px 6px;
    font-size: 22px;
}
.row {
    display: flex;
    justify-content: space-between;
    align-items: center;
    height: 37px;
    color: #999;
}
.row b {
    color: #333;
    font-size: 20px;
    font-weight: 500;
}
.segment ~ .row {
    height: 38px;
}
.row.red, .red b {
    color: #ff2e43;
}
.row.orange, .orange b {
    color: #ff9b0d;
}
.row.note {
    justify-content: flex-start;
    gap: 12px;
}
.segment {
    display: grid;
    grid-template-columns: 1fr 1fr;
    padding: 4px;
    margin: 6px 0 5px;
    border-radius: 10px;
    background: #f4f4f4;
    color: #888;
}
.segment button {
    height: 39px;
    border-radius: 8px;
}
.segment .on {
    background: #fff;
    color: #222;
    font-weight: 500;
}
.chip-actions {
    display: flex;
    justify-content: space-between;
    padding: 0 6px 4px;
    margin-top: auto;
}
.chip-actions button {
    height: 43px;
    border-radius: 4px;
}
.pick {
    display: flex;
    align-items: center;
    padding: 0 10px;
    background: #e9eefe;
    color: #3d6bfa;
}
.close {
    padding: 0 8px;
    background: #f4f4f4;
    color: #555;
    font-size: 25px;
}

/* bottom bar */
.bottom {
    border-top: 8px solid #f4f4f4;
    background: #1a1a1a;
    height: 163px;
}
.bottom-bar {
    display: grid;
    grid-template-columns: 145px repeat(4, 1fr);
    height: 128px;
    border-top: 1px solid #444;
    font-size: 20px;
    color: #b3b3b3;
}
.bottom-bar button {
    display: flex;
    flex-direction: column;
    align-items: center;
    padding-top: 9px;
    line-height: 36px;
}
.bottom-bar button:not(.index) svg {
    fill: none;
    stroke: #999;
    stroke-width: 2;
}
.bottom-bar .index {
    color: #009c00;
    padding-right: 6px;
}
.bottom-bar .point {
    font-size: 25px;
    line-height: 38px;
}
.bottom-bar .pct {
    font-size: 22px;
    line-height: 26px;
}
.pct i {
    margin-right: 12px;
    font-size: 20px;
    font-style: normal;
    color: #b3b3b3;
}
.home {
    width: 274px;
    height: 10px;
    margin: 0 auto;
    border-radius: 5px;
    background: #fff;
}
```
